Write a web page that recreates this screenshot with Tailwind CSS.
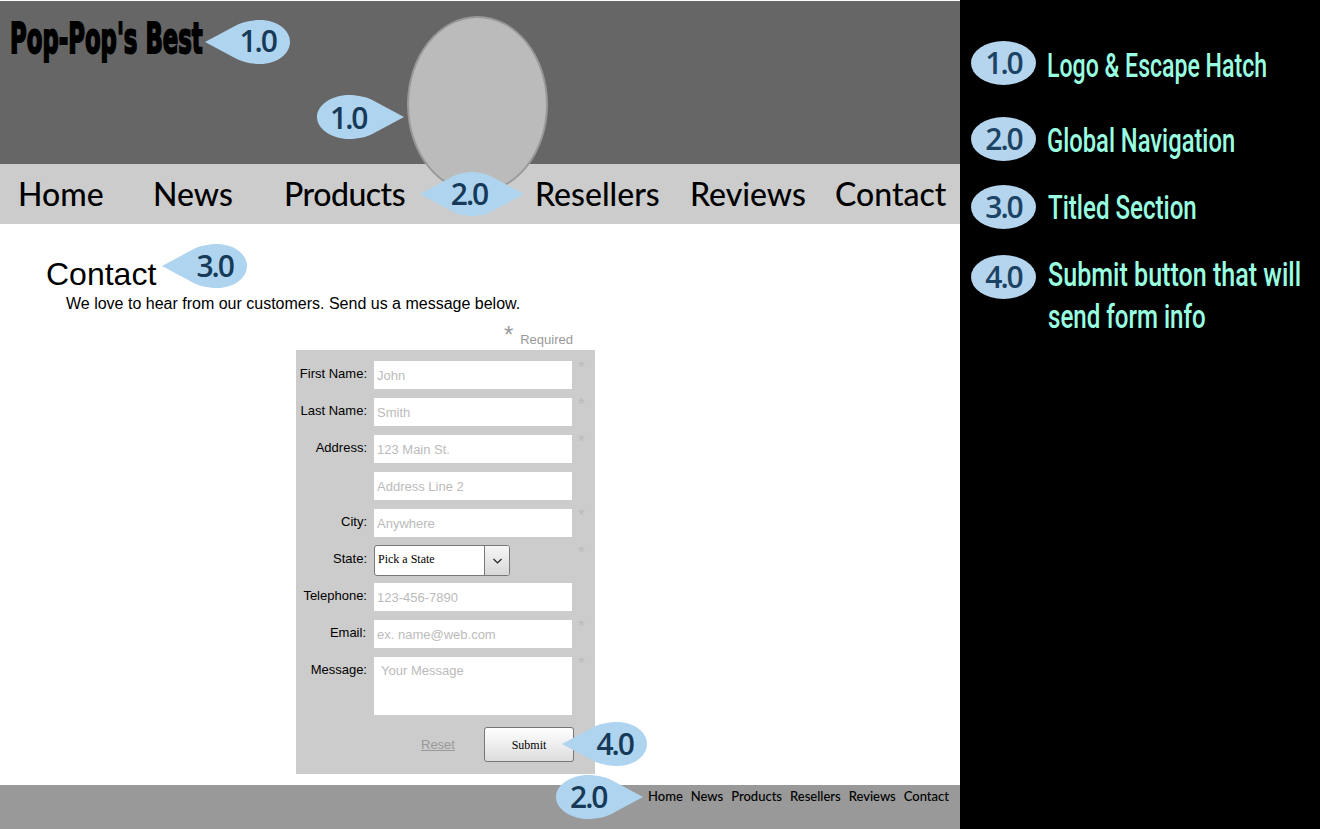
<!DOCTYPE html>
<html lang="en">
<head>
    <meta charset="UTF-8">
    <title>Contact Wireframe</title>
    <script src="https://cdn.jsdelivr.net/npm/@tailwindcss/browser@4"></script>
</head>
<body class="bg-black overflow-hidden">
<div class="relative flex w-[1320px] h-[829px] overflow-hidden font-['Liberation_Sans',sans-serif]">

    <!-- Wireframe -->
    <div class="relative flex flex-col w-[960px] h-[829px] bg-white">
        <!-- Header -->
        <header class="mt-px h-[163px] bg-[#666666] pl-[10px] pt-[13px]">
            <div class="origin-left scale-x-[0.543] whitespace-nowrap font-['DejaVu_Sans',sans-serif] font-bold text-[42px] leading-[50px] text-black [-webkit-text-stroke:2px_black]">Pop-Pop's Best</div>
        </header>

        <!-- Global nav -->
        <nav class="grid grid-cols-[135px_132px_250px_155px_145px_125px] items-center h-[60px] bg-[#cccccc] pl-[18px] font-['Lato',sans-serif] font-medium text-[32px] leading-[60px] text-black">
            <a>Home</a>
            <a>News</a>
            <a class="-ml-px tracking-[-0.5px]">Products</a>
            <a>Resellers</a>
            <a>Reviews</a>
            <a>Contact</a>
        </nav>

        <!-- Main -->
        <main class="flex-1 relative">
            <h1 class="pl-[46px] pt-[32px] text-[32px] leading-[36px] text-black">Contact</h1>
            <p class="pl-[66px] pt-[2px] text-[16px] leading-[20px] text-black">We love to hear from our customers. Send us a message below.</p>

            <div class="ml-[296px] w-[299px] mt-[9px]">
                <div class="flex justify-end items-start h-[27px] pr-[22px] text-[13px] text-[#999999]">
                    <span class="text-[24px] leading-[24px] mr-[7px]">*</span>
                    <span class="pt-[9px] leading-[16px]">Required</span>
                </div>

                <form class="w-[299px] h-[424px] bg-[#cccccc] pt-[11px] text-[13px] text-black">
                    <div class="grid grid-cols-[71px_198px_30px] gap-x-[7px] gap-y-[9px] items-start -mr-[7px]">
                        <label class="text-right leading-[26px]">First Name:</label>
                        <input class="h-[28px] bg-white px-[3px] text-[13px] placeholder:text-[#bbbbbb]" placeholder="John">
                        <span class="-ml-[1px] text-[17px] text-[#bbbbbb] leading-[14px]">*</span>

                        <label class="text-right leading-[26px]">Last Name:</label>
                        <input class="h-[28px] bg-white px-[3px] text-[13px] placeholder:text-[#bbbbbb]" placeholder="Smith">
                        <span class="-ml-[1px] text-[17px] text-[#bbbbbb] leading-[14px]">*</span>

                        <label class="text-right leading-[26px]">Address:</label>
                        <input class="h-[28px] bg-white px-[3px] text-[13px] placeholder:text-[#bbbbbb]" placeholder="123 Main St.">
                        <span class="-ml-[1px] text-[17px] text-[#bbbbbb] leading-[14px]">*</span>

                        <label></label>
                        <input class="h-[28px] bg-white px-[3px] text-[13px] placeholder:text-[#bbbbbb]" placeholder="Address Line 2">
                        <span></span>

                        <label class="text-right leading-[26px]">City:</label>
                        <input class="h-[28px] bg-white px-[3px] text-[13px] placeholder:text-[#bbbbbb]" placeholder="Anywhere">
                        <span class="-ml-[1px] text-[17px] text-[#bbbbbb] leading-[14px]">*</span>

                        <label class="text-right leading-[26px]">State:</label>
                        <div class="flex w-[136px] h-[31px] -mt-[1px] -mb-[2px] border border-[#777777] rounded-[3px] bg-white overflow-hidden font-['Liberation_Serif',serif] text-[12px]">
                            <span class="flex-1 pl-[3px] leading-[27px]">Pick a State</span>
                            <span class="flex items-center justify-center w-[25px] border-l border-[#777777] bg-gradient-to-b from-[#f6f6f6] to-[#d8d8d8]">
                                <svg width="9" height="6" viewBox="0 0 9 6" fill="none" stroke="#222" stroke-width="1.2"><path d="M0.5 1 L4.5 5 L8.5 1"/></svg>
                            </span>
                        </div>
                        <span class="-ml-[1px] text-[17px] text-[#bbbbbb] leading-[14px]">*</span>

                        <label class="text-right leading-[26px]">Telephone:</label>
                        <input class="h-[28px] bg-white px-[3px] text-[13px] placeholder:text-[#bbbbbb]" placeholder="123-456-7890">
                        <span></span>

                        <label class="text-right leading-[26px] pr-[1px]">Email:</label>
                        <input class="h-[28px] bg-white px-[3px] text-[13px] placeholder:text-[#bbbbbb]" placeholder="ex. name@web.com">
                        <span class="-ml-[1px] text-[17px] text-[#bbbbbb] leading-[14px]">*</span>

                        <label class="text-right leading-[26px]">Message:</label>
                        <textarea class="h-[58px] bg-white px-[7px] py-[6px] text-[13px] leading-[16px] resize-none placeholder:text-[#bbbbbb]" placeholder="Your Message"></textarea>
                        <span class="-ml-[1px] text-[17px] text-[#bbbbbb] leading-[14px]">*</span>
                    </div>

                    <div class="flex items-center mt-[12px] pl-[125px]">
                        <a class="w-[63px] text-[#999999] underline">Reset</a>
                        <button type="button" class="w-[90px] h-[35px] border border-[#777777] rounded-[3px] bg-gradient-to-b from-white to-[#dddddd] font-['Liberation_Serif',serif] text-[12px] text-black">Submit</button>
                    </div>
                </form>
            </div>
        </main>

        <!-- Footer -->
        <footer class="flex justify-end gap-[8px] h-[44px] bg-[#999999] pr-[11px] pt-[3px] font-['Lato',sans-serif] font-medium text-[13px] leading-[17px] text-black">
            <a>Home</a><a>News</a><a>Products</a><a>Resellers</a><a>Reviews</a><a>Contact</a>
        </footer>

        <!-- Image placeholder -->
        <div class="absolute left-[407px] top-[16px] w-[141px] h-[177px] rounded-[50%] bg-[#bbbbbb] border-2 border-[#999999]"></div>

        <!-- Callouts -->
        <div class="absolute left-[205px] top-[20px] w-[85px] h-[44px] flex items-center justify-end pr-[14px] font-['Open_Sans',sans-serif] font-semibold text-[30px] tracking-[-2px] text-[#163a58]">
            <svg class="absolute inset-0" width="85" height="44" viewBox="0 0 85 44" fill="#afd4ef"><path d="M0 22 L28 7 C36 2 46 0 55 0 C72 0 85 10 85 22 C85 34 72 44 55 44 C46 44 36 42 28 37 Z"/></svg>
            <span class="relative -top-[2px]">1.0</span>
        </div>
        <div class="absolute left-[317px] top-[95px] w-[87px] h-[44px] flex items-center pl-[14px] font-['Open_Sans',sans-serif] font-semibold text-[30px] tracking-[-2px] text-[#163a58]">
            <svg class="absolute inset-0" width="87" height="44" viewBox="0 0 87 44" fill="#afd4ef"><path d="M87 22 L59 7 C51 2 41 0 32 0 C15 0 0 10 0 22 C0 34 15 44 32 44 C41 44 51 42 59 37 Z"/></svg>
            <span class="relative -left-px">1.0</span>
        </div>
        <div class="absolute left-[420px] top-[172px] w-[104px] h-[44px] flex items-center justify-center font-['Open_Sans',sans-serif] font-semibold text-[30px] tracking-[-2px] text-[#163a58]">
            <svg class="absolute inset-0" width="104" height="44" viewBox="0 0 104 44" fill="#afd4ef"><path d="M0 22 L28 7 C36 2 44 0 52 0 C60 0 68 2 76 7 L104 22 L76 37 C68 42 60 44 52 44 C44 44 36 42 28 37 Z"/></svg>
            <span class="relative -top-px -left-[3px]">2.0</span>
        </div>
        <div class="absolute left-[162px] top-[244px] w-[85px] h-[44px] flex items-center justify-end pr-[14px] font-['Open_Sans',sans-serif] font-semibold text-[30px] tracking-[-2px] text-[#163a58]">
            <svg class="absolute inset-0" width="85" height="44" viewBox="0 0 85 44" fill="#afd4ef"><path d="M0 22 L28 7 C36 2 46 0 55 0 C72 0 85 10 85 22 C85 34 72 44 55 44 C46 44 36 42 28 37 Z"/></svg>
            <span class="relative -top-px">3.0</span>
        </div>
        <div class="absolute left-[562px] top-[722px] w-[85px] h-[44px] flex items-center justify-end pr-[14px] font-['Open_Sans',sans-serif] font-semibold text-[30px] tracking-[-2px] text-[#163a58]">
            <svg class="absolute inset-0" width="85" height="44" viewBox="0 0 85 44" fill="#afd4ef"><path d="M0 22 L28 7 C36 2 46 0 55 0 C72 0 85 10 85 22 C85 34 72 44 55 44 C46 44 36 42 28 37 Z"/></svg>
            <span class="relative -top-px">4.0</span>
        </div>
        <div class="absolute left-[556px] top-[775px] w-[87px] h-[44px] flex items-center pl-[14px] font-['Open_Sans',sans-serif] font-semibold text-[30px] tracking-[-2px] text-[#163a58]">
            <svg class="absolute inset-0" width="87" height="44" viewBox="0 0 87 44" fill="#afd4ef"><path d="M87 22 L59 7 C51 2 41 0 32 0 C15 0 0 10 0 22 C0 34 15 44 32 44 C41 44 51 42 59 37 Z"/></svg>
            <span class="relative -top-px">2.0</span>
        </div>
    </div>

    <!-- Legend -->
    <aside class="w-[360px] h-[829px] bg-black pt-[41px] pl-[11px] font-['Roboto',sans-serif] font-medium text-[33px] leading-[42px] text-[#99ffe0]">
        <div class="flex gap-[11px] items-start h-[44px]">
            <span class="flex shrink-0 items-center justify-center w-[65px] h-[44px] rounded-[50%] bg-[#b5d5ee] font-['Open_Sans',sans-serif] font-semibold text-[30px] tracking-[-2px] text-[#1c4363]">1.0</span>
            <div class="origin-left scale-x-[0.70] whitespace-nowrap pt-[4px]">Logo &amp; Escape Hatch</div>
        </div>
        <div class="flex gap-[11px] items-start h-[44px] mt-[32px]">
            <span class="flex shrink-0 items-center justify-center w-[65px] h-[44px] rounded-[50%] bg-[#b5d5ee] font-['Open_Sans',sans-serif] font-semibold text-[30px] tracking-[-2px] text-[#1c4363]">2.0</span>
            <div class="origin-left scale-x-[0.72] whitespace-nowrap pt-[3px]">Global Navigation</div>
        </div>
        <div class="flex gap-[12px] items-start h-[44px] mt-[24px]">
            <span class="flex shrink-0 items-center justify-center w-[65px] h-[44px] rounded-[50%] bg-[#b5d5ee] font-['Open_Sans',sans-serif] font-semibold text-[30px] tracking-[-2px] text-[#1c4363]">3.0</span>
            <div class="origin-left scale-x-[0.73] whitespace-nowrap pt-[2px]">Titled Section</div>
        </div>
        <div class="flex gap-[12px] items-start h-[44px] mt-[26px]">
            <span class="flex shrink-0 items-center justify-center w-[65px] h-[44px] rounded-[50%] bg-[#b5d5ee] font-['Open_Sans',sans-serif] font-semibold text-[30px] tracking-[-2px] text-[#1c4363]">4.0</span>
            <div class="whitespace-nowrap -mt-[1px]">
                <div class="origin-left scale-x-[0.76]">Submit button that will</div>
                <div class="origin-left scale-x-[0.73]">send form info</div>
            </div>
        </div>
    </aside>
</div>
</body>
</html>
